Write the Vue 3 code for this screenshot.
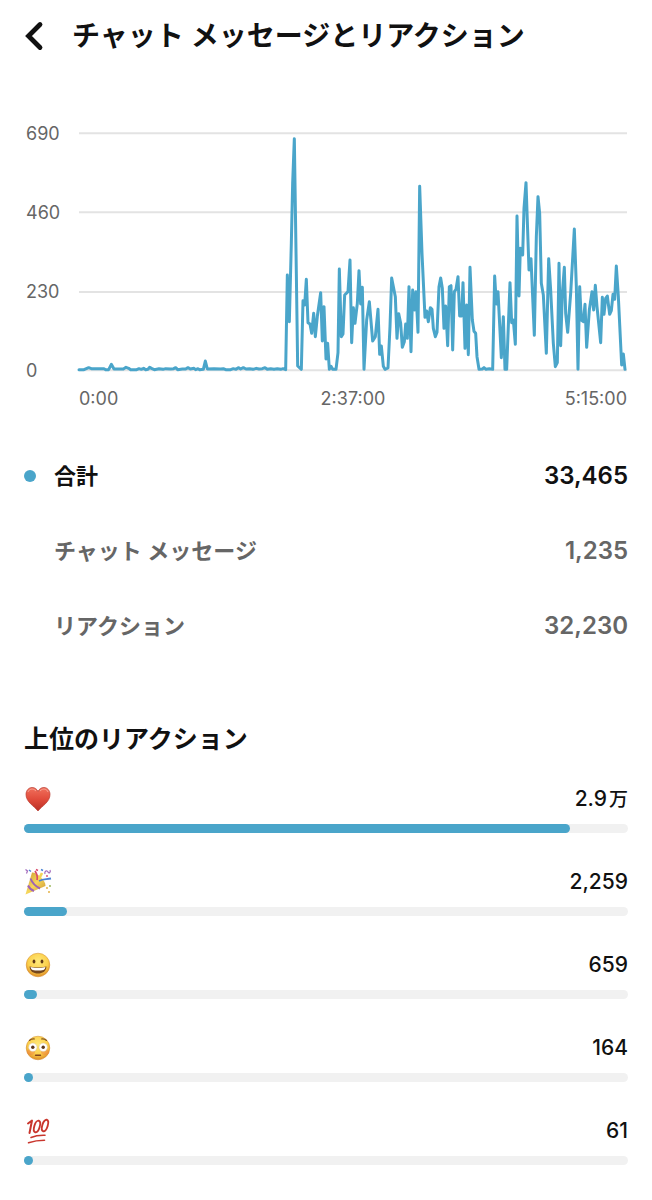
<script setup>
const ticks = [690, 460, 230, 0]
const gridLines = [1, 238, 477, 712]
const times = ['0:00', '2:37:00', '5:15:00']

// Activity over the stream, as x,y pairs in the chart's own units
const activity = `
0,710 15,710 29,704 37,707 43,707 75,707 80,710 89,710 97,694 105,708 133,708 141,703 149,706 155,710
173,710 180,707 187,709 194,706 200,710 207,709 212,703 219,707 226,710 240,707 252,709 260,707 275,708
284,707 290,704 296,710 310,708 320,708 327,704 334,708 345,706 350,710 357,707 362,710 373,709 379,684
385,708 405,707 425,708 433,707 440,710 455,710 463,707 471,709 478,704 485,708 493,704 501,708 512,707
522,709 532,706 540,708 550,707 558,704 565,709 575,707 585,709 595,707 605,709 612,707 620,710
625,426 631,566 637,330 641,150 646,17 652,421 656,699 667,709 672,503 677,516 682,439 687,569 693,573
698,601 704,541 709,611 715,550 725,479 730,624 735,521 741,678 746,631 751,709 756,700 761,709 771,709
777,659 781,408 787,611 792,603 797,486 807,476 813,381 818,629 823,524 828,571 835,511 840,413
845,513 850,463 855,709 863,561 871,506 881,624 889,611 897,529 902,664 907,639 913,700 918,709 927,705
933,581 938,435 949,491 954,616 959,542 965,571 970,643 976,626 980,573 985,616 990,461 996,656
1001,471 1006,531 1011,476 1017,598 1022,160 1029,361 1038,553 1043,534 1048,566 1054,524 1059,529
1063,586 1069,611 1074,598 1080,461 1085,435 1090,466 1095,586 1100,519 1106,638 1111,461 1116,458
1121,651 1126,476 1131,469 1137,431 1142,549 1148,549 1152,449 1158,646 1163,516 1168,665 1173,403
1180,561 1185,595 1190,601 1194,671 1200,709 1210,708 1215,704 1221,709 1231,707 1241,709 1247,429
1252,513 1257,476 1267,674 1273,551 1278,709 1283,709 1293,449 1298,569 1303,561 1309,634 1314,249
1320,489 1324,346 1331,366 1335,226 1341,149 1350,411 1356,377 1366,607 1372,311 1377,191 1382,241
1387,451 1393,486 1402,661 1409,377 1415,471 1423,631 1429,701 1435,689 1440,391 1445,638 1450,481
1456,403 1460,541 1466,598 1475,481 1486,288 1492,461 1497,709 1502,461 1507,561 1513,566 1518,514
1523,643 1531,531 1539,476 1544,531 1549,457 1554,521 1565,629 1570,493 1575,544 1580,496 1585,489
1592,544 1597,533 1602,484 1607,499 1612,399 1618,491 1628,696 1633,663 1638,709`

const totals = [
  { label: '合計', value: '33,465', main: true },
  { label: 'チャット メッセージ', value: '1,235' },
  { label: 'リアクション', value: '32,230' },
]

const reactions = [
  { icon: 'heart', name: 'ハート', value: '2.9', unit: '万', share: 90.4 },
  { icon: 'party', name: 'クラッカー', value: '2,259', share: 7.1 },
  { icon: 'grin', name: '笑顔', value: '659', share: 2.1 },
  { icon: 'flushed', name: '赤面', value: '164', share: 0.5 },
  { icon: 'hundred', name: '100点', value: '61', share: 0.2 },
]
</script>

<template>
  <main class="page">
    <header class="header">
      <button class="back" type="button" aria-label="戻る">
        <svg viewBox="0 0 20 30" width="20" height="30" aria-hidden="true">
          <path d="M16 3.5 4.500 15l11.500 11.5" fill="none" stroke="currentColor" stroke-width="4.800" stroke-linecap="round" stroke-linejoin="miter" />
        </svg>
      </button>
      <h1 class="title">チャット メッセージとリアクション</h1>
    </header>

    <section class="chart">
      <div class="ticks">
        <span v-for="t in ticks" :key="t">{{ t }}</span>
      </div>
      <svg class="plot" viewBox="0 0 1644 714" preserveAspectRatio="none" aria-hidden="true">
        <line v-for="y in gridLines" :key="y" class="grid" x1="0" x2="1644" :y1="y" :y2="y" />
        <polyline class="series" :points="activity" />
      </svg>
      <div class="times">
        <span v-for="t in times" :key="t">{{ t }}</span>
      </div>
    </section>

    <dl class="totals">
      <div v-for="t in totals" :key="t.label" class="total" :class="{ main: t.main }">
        <dt>{{ t.label }}</dt>
        <dd>{{ t.value }}</dd>
      </div>
    </dl>

    <section>
      <h2 class="subtitle">上位のリアクション</h2>
      <ul class="reactions">
        <li v-for="r in reactions" :key="r.icon">
          <div class="row">
            <svg class="emoji" viewBox="0 0 28 28" role="img" :aria-label="r.name">
              <defs>
                <linearGradient id="red" x1="0" y1="0" x2="0" y2="1">
                  <stop offset="0" stop-color="#f0705c" />
                  <stop offset="0.5" stop-color="#e14b3b" />
                  <stop offset="1" stop-color="#b82f25" />
                </linearGradient>
                <linearGradient id="cone" x1="0" y1="0" x2="1" y2="1">
                  <stop offset="0" stop-color="#c9952f" />
                  <stop offset="0.5" stop-color="#f6d75a" />
                  <stop offset="1" stop-color="#c9902e" />
                </linearGradient>
                <radialGradient id="face" cx="0.5" cy="0.35" r="0.65">
                  <stop offset="0" stop-color="#ffe978" />
                  <stop offset="0.65" stop-color="#fbcf4b" />
                  <stop offset="1" stop-color="#dd8b25" />
                </radialGradient>
              </defs>
              <g v-if="r.icon === 'heart'">
                <path d="M14 26C10 21 2 17 2 9.500C2 5.500 4.700 2.500 8 2.500C11 2.500 13 4.200 14 6.500C15 4.200 17 2.500 20 2.500C23.300 2.500 26 5.500 26 9.500C26 17 18 21 14 26Z" fill="url(#red)" stroke="#b93b30" stroke-width="0.7" />
                <path d="M4 7C5 4 9 2.800 12 6M16 6C19 2.800 23 4 24 7" fill="none" stroke="#f7a293" stroke-width="1" />
              </g>
              <g v-else-if="r.icon === 'party'">
                <path d="M8 4.500C12 4 22 12 21.500 18L1.500 26.500Z" fill="url(#cone)" />
                <path d="M6.500 10.500Q9 17 16 20.500M4 17.500Q6 21.500 10 23" fill="none" stroke="#9d63b5" stroke-width="2" />
                <path d="M13 12C14 8 13 6 11 3" fill="none" stroke="#d84a6b" stroke-width="1.700" />
                <path d="M15 13C19 10.500 22 11.500 27 10.500" fill="none" stroke="#4c83d4" stroke-width="1.800" />
                <path d="M15 11 18 5" stroke="#f4d458" stroke-width="2.600" />
                <path d="M1.500 1.500 3.500 3 2.500 5.500M21 6C20 3 23 2 24 4C25 6 27 4 26 2" fill="none" stroke="#a36abc" stroke-width="1.200" />
                <path d="M5 2 7 3.500M17 1.500 19 2.500" stroke="#4c83d4" stroke-width="1.400" />
                <path d="M12 1.500 14 2.500" stroke="#d84a6b" stroke-width="1.400" />
                <circle cx="23" cy="8" r="0.900" fill="#d84a6b" />
                <circle cx="26" cy="18" r="0.900" fill="#93b04e" />
                <circle cx="23" cy="20" r="0.900" fill="#e2aa35" />
                <circle cx="25" cy="24" r="0.900" fill="#e2aa35" />
              </g>
              <g v-else-if="r.icon === 'grin'">
                <circle cx="14" cy="14" r="11.800" fill="url(#face)" stroke="#d28a2c" stroke-width="0.500" />
                <ellipse cx="10" cy="10.500" rx="1.400" ry="2" fill="#633b17" />
                <ellipse cx="18" cy="10.500" rx="1.400" ry="2" fill="#633b17" />
                <path d="M5.500 15.500Q14 17.500 22.500 15.500C22 20.500 18.500 22.500 14 22.500S6 20.500 5.500 15.500Z" fill="#74461c" />
                <path d="M6.500 16Q14 18 21.500 16Q21 18.500 19.500 19Q14 20.200 8.500 19Q7 18.500 6.500 16Z" fill="#fff" />
              </g>
              <g v-else-if="r.icon === 'flushed'">
                <circle cx="14" cy="14" r="11.800" fill="url(#face)" stroke="#d28a2c" stroke-width="0.500" />
                <ellipse cx="7" cy="18" rx="4" ry="3" fill="#ef7e43" opacity="0.450" />
                <ellipse cx="21" cy="18" rx="4" ry="3" fill="#ef7e43" opacity="0.450" />
                <path d="M5.500 6.500Q7.500 4.500 10.500 5M17.500 5Q20.500 4.500 22.500 6.500" fill="none" stroke="#80511f" stroke-width="1.100" stroke-linecap="round" />
                <circle cx="8.800" cy="13.300" r="4.200" fill="#fff" stroke="#d1b890" stroke-width="0.400" />
                <circle cx="19.200" cy="13.300" r="4.200" fill="#fff" stroke="#d1b890" stroke-width="0.400" />
                <circle cx="8.800" cy="13.300" r="1.700" fill="#5d3819" />
                <circle cx="19.200" cy="13.300" r="1.700" fill="#5d3819" />
                <path d="M11.500 21.300H16.500" stroke="#80451c" stroke-width="1.400" stroke-linecap="round" />
              </g>
              <g v-else fill="none" stroke="#c9362d" stroke-linecap="round" stroke-linejoin="round">
                <path d="M4 6.500 8 3.500 5.500 16" stroke-width="2" />
                <ellipse cx="13" cy="9.500" rx="2.700" ry="6" transform="rotate(17 13 9.500)" stroke-width="1.900" />
                <ellipse cx="21" cy="8.500" rx="2.700" ry="6" transform="rotate(17 21 8.500)" stroke-width="1.900" />
                <path d="M7 20.500Q13 18 21 18.300M4.500 25.800Q12 23.300 20.500 23.300" stroke-width="1.600" />
              </g>
            </svg>
            <span class="value">{{ r.value }}<span v-if="r.unit" class="unit">{{ r.unit }}</span></span>
          </div>
          <div class="track">
            <div class="fill" :style="{ width: r.share + '%' }"></div>
          </div>
        </li>
      </ul>
    </section>
  </main>
</template>

<style>
body {
  margin: 0;
  background: #fff;
}
</style>

<style scoped>
.page {
  box-sizing: border-box;
  padding: 12px 24px 32px;
  color: #111;
  font-family: Inter, "Noto Sans CJK JP", sans-serif;
}

.header {
  display: flex;
  align-items: center;
  gap: 28px;
  height: 48px;
}

.back {
  display: flex;
  padding: 0;
  border: 0;
  background: none;
  color: #111;
  cursor: pointer;
}

.title,
.subtitle {
  margin: 0;
  font-weight: 600;
}

.title {
  font-size: 28px;
  line-height: 40px;
}

.chart {
  display: grid;
  grid-template-columns: 55px 1fr;
  margin-top: 73px;
  padding-right: 1px;
  color: #666;
  font-size: 18px;
  line-height: 20px;
}

.ticks {
  display: flex;
  flex-direction: column;
  justify-content: space-between;
  margin: -9px 0 -10px;
  padding-left: 2px;
}

.plot {
  display: block;
  width: 100%;
  height: 238px;
  overflow: visible;
}

.grid {
  stroke: #e3e3e3;
  stroke-width: 2;
  vector-effect: non-scaling-stroke;
}

.series {
  fill: none;
  stroke: #4aa5ca;
  stroke-width: 3;
  stroke-linecap: round;
  stroke-linejoin: round;
  vector-effect: non-scaling-stroke;
}

.times {
  grid-column: 2;
  display: grid;
  grid-template-columns: 1fr auto 1fr;
  margin-top: 18px;
}

.times span:last-child {
  text-align: right;
}

.totals {
  margin: 29px 0 0;
}

.total {
  display: flex;
  align-items: baseline;
  height: 75px;
  color: #666;
  font-weight: 600;
  line-height: 75px;
}

.total dt {
  padding-left: 30px;
  font-size: 22px;
}

.total dd {
  margin: 0 0 0 auto;
  font-size: 24px;
}

.total.main {
  color: #111;
}

.total.main::before {
  align-self: center;
  width: 12px;
  height: 12px;
  border-radius: 50%;
  background: #4aa5ca;
  content: "";
}

.total.main dt {
  padding-left: 18px;
}

.subtitle {
  margin-top: 56px;
  font-size: 25px;
  line-height: 40px;
}

.reactions {
  display: grid;
  gap: 35px;
  margin: 26px 0 0;
  padding: 0;
  list-style: none;
}

.row {
  display: flex;
  align-items: center;
  justify-content: space-between;
  height: 28px;
}

.emoji {
  width: 28px;
  height: 28px;
}

.value {
  font-size: 21px;
  font-weight: 500;
  line-height: 28px;
}

.unit {
  margin-left: 2px;
  font-size: 19px;
}

.track {
  margin-top: 11px;
  border-radius: 5px;
  background: #f1f1f1;
}

.fill {
  min-width: 9px;
  height: 9px;
  border-radius: 5px;
  background: #4aa5ca;
}
</style>
